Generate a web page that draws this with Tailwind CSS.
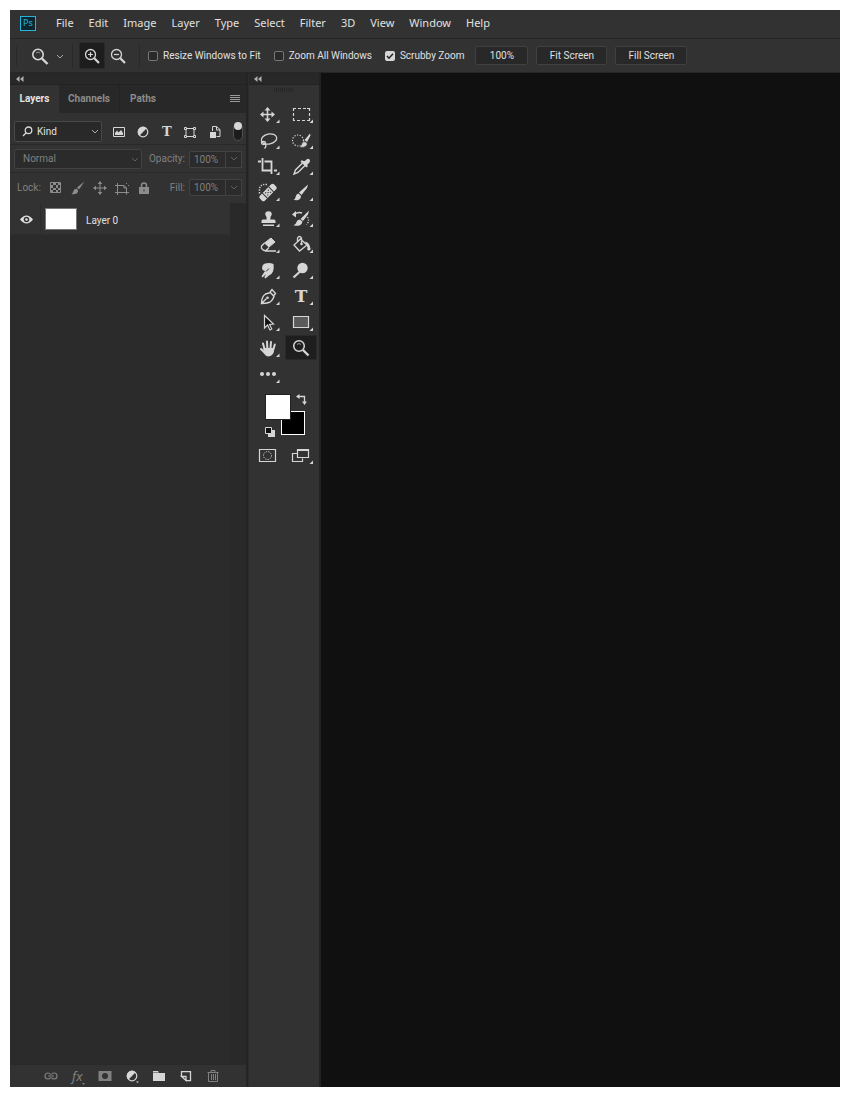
<!DOCTYPE html>
<html lang="en">
<head>
    <meta charset="UTF-8">
    <meta name="viewport" content="width=device-width, initial-scale=1.0">
    <title>Photoshop Workspace</title>
    <script src="https://cdn.jsdelivr.net/npm/@tailwindcss/browser@4"></script>
</head>
<body class="bg-white h-screen p-[10px] flex flex-col font-[Roboto,'Noto_Sans',sans-serif] text-[10px] leading-4 text-[#e0e0e0] cursor-default">

    <!-- Menu bar -->
    <nav class="flex items-center h-7 shrink-0 bg-[#323232] pl-[10px] pb-[2px] font-['Noto_Sans',sans-serif] text-[11px]">
        <span class="w-4 h-[15px] mr-5 border border-[#27b4d8] bg-[#0c2630] text-[#27b4d8] text-[9px] leading-3 text-center">Ps</span>
        <div class="flex gap-[15px]">
            <a href="#">File</a>
            <a href="#">Edit</a>
            <a href="#">Image</a>
            <a href="#">Layer</a>
            <a href="#">Type</a>
            <a href="#">Select</a>
            <a href="#">Filter</a>
            <a href="#">3D</a>
            <a href="#">View</a>
            <a href="#">Window</a>
            <a href="#">Help</a>
        </div>
    </nav>

    <!-- Options bar -->
    <div class="flex items-center h-[35px] shrink-0 bg-[#323232] border-t border-b border-[#262626] pl-[6px]">
        <span class="w-px h-5 bg-[#292929]"></span>
        <button class="flex items-center ml-[14px] gap-[7px]" aria-label="Zoom tool presets">
            <svg class="w-[18px] h-[18px]" viewBox="0 0 18 18" fill="none" stroke="#d6d6d6"><circle cx="7" cy="7.5" r="5.2" stroke-width="1.6"/><path d="M11 11.500l5.500 5.500" stroke-width="2.4"/><path d="M5 6q2-2 4.200 0" stroke="#999"/></svg>
            <svg class="w-2 h-2" viewBox="0 0 8 8" fill="none" stroke="#a8a8a8"><path d="M1 3l3 3 3-3"/></svg>
        </button>
        <span class="w-px h-6 ml-2 bg-[#292929]"></span>
        <button class="flex items-center justify-center w-[26px] h-[27px] ml-[6px] bg-[#1d1d1d] border border-[#292929]" aria-label="Zoom in">
            <svg class="w-4 h-4 shrink-0" viewBox="0 0 16 16" fill="none" stroke="#d6d6d6"><circle cx="6.5" cy="6.5" r="5" stroke-width="1.3"/><path d="M4 6.5h5M6.5 4v5" stroke-width="1.2"/><path d="M10.3 10.3l4.7 4.7" stroke-width="2.2"/></svg>
        </button>
        <button class="flex items-center justify-center w-[26px] h-[27px]" aria-label="Zoom out">
            <svg class="w-4 h-4 shrink-0" viewBox="0 0 16 16" fill="none" stroke="#d6d6d6"><circle cx="6.5" cy="6.5" r="5" stroke-width="1.3"/><path d="M4 6.5h5" stroke-width="1.2"/><path d="M10.3 10.3l4.7 4.7" stroke-width="2.2"/></svg>
        </button>
        <span class="w-px h-6 ml-2 bg-[#292929]"></span>
        <div class="flex items-center gap-[13px] ml-2">
            <label class="flex items-center gap-[5px]"><input type="checkbox" class="appearance-none w-[10px] h-[10px] border border-[#777] rounded-[2px] bg-[#292929]">Resize Windows to Fit</label>
            <label class="flex items-center gap-[5px]"><input type="checkbox" class="appearance-none w-[10px] h-[10px] border border-[#777] rounded-[2px] bg-[#292929]">Zoom All Windows</label>
            <label class="flex items-center gap-[5px]">
                <span class="grid">
                    <input type="checkbox" checked class="appearance-none w-[10px] h-[10px] rounded-[2px] bg-[#d6d6d6] col-start-1 row-start-1">
                    <svg class="w-[10px] h-[10px] col-start-1 row-start-1 pointer-events-none" viewBox="0 0 10 10" fill="none" stroke="#222" stroke-width="1.5"><path d="M2 5l2 2.2L8 2.8"/></svg>
                </span>Scrubby Zoom</label>
        </div>
        <div class="flex gap-2 ml-[11px]">
            <button class="w-[53px] h-[19px] bg-[#282828] border border-[#404040] rounded-[2px]">100%</button>
            <button class="w-[71px] h-[19px] bg-[#282828] border border-[#404040] rounded-[2px]">Fit Screen</button>
            <button class="w-[72px] h-[19px] bg-[#282828] border border-[#404040] rounded-[2px]">Fill Screen</button>
        </div>
    </div>

    <main class="flex flex-1 min-h-0 bg-[#101010]">
        <!-- Layers panel -->
        <section class="flex flex-col w-[238px] shrink-0 bg-[#2b2b2b] border-r-2 border-[#242424]">
            <div class="flex items-center h-3 shrink-0 bg-[#282828] border-b border-[#222] pl-[6px]">
                <svg class="w-2 h-[6px]" viewBox="0 0 8 6" fill="#b0b0b0"><path d="M3.5 0v6L0 3zM7.5 0v6L4 3z"/></svg>
            </div>
            <div class="flex items-stretch h-7 shrink-0 bg-[#282828] font-bold text-[#8c8c8c]">
                <button class="w-[49px] bg-[#323232] text-[#e4e4e4]">Layers</button>
                <button class="w-[61px] border-r border-[#232323]">Channels</button>
                <button class="w-[46px]">Paths</button>
                <button class="ml-auto mr-[6px]" aria-label="Panel menu">
                    <svg class="w-[10px] h-2" viewBox="0 0 10 8" fill="#999"><path d="M0 0h10v1H0zM0 2h10v1H0zM0 4h10v1H0zM0 6h10v1H0z"/></svg>
                </button>
            </div>

            <!-- Filter row -->
            <div class="flex items-center h-8 shrink-0 bg-[#323232] border-b border-[#292929] pl-[4px] pr-[3px] pt-[6px]">
                <div class="relative">
                    <select aria-label="Filter type" class="block appearance-none w-[88px] h-[21px] bg-[#292929] border border-[#484848] rounded-[2px] pl-[22px]">
                        <option>Kind</option>
                    </select>
                    <svg class="absolute left-[8px] top-[5px] w-[11px] h-[11px] pointer-events-none" viewBox="0 0 11 11" fill="none" stroke="#d6d6d6" stroke-width="1.3"><circle cx="6.5" cy="4.3" r="3.3"/><path d="M4.2 6.8L1 10"/></svg>
                    <svg class="absolute right-[3px] top-[7px] w-2 h-2 pointer-events-none" viewBox="0 0 8 8" fill="none" stroke="#a8a8a8"><path d="M1 2l3 3 3-3"/></svg>
                </div>
                <div class="flex items-center justify-between flex-1 ml-[11px] text-[#d6d6d6]">
                    <button aria-label="Pixel layers"><svg class="w-3 h-[14px]" viewBox="0 0 12 14"><path d="M.5 2.5h11v9H.5z" fill="none" stroke="currentColor"/><path d="M2 10V8l2-2.500L5.500 7.500 8 5l2 3v2z" fill="currentColor"/></svg></button>
                    <button aria-label="Adjustment layers"><svg class="w-3 h-[14px]" viewBox="0 0 12 14"><circle cx="6" cy="7" r="4.800" fill="none" stroke="currentColor" stroke-width="1.200"/><path d="M9.700 3.300A5.200 5.200 0 0 0 2.300 10.700z" fill="currentColor"/></svg></button>
                    <button aria-label="Type layers" class="font-['DejaVu_Serif',serif] font-bold text-[13px] leading-[14px]">T</button>
                    <button aria-label="Shape layers"><svg class="w-3 h-[14px]" viewBox="0 0 12 14" fill="none" stroke="currentColor"><path d="M2 4v6M10 4v6M3 3.500h6M3 11.500h6M.5 2.500h2v2h-2zM9.500 2.500h2v2h-2zM.5 10.500h2v2h-2zM9.500 10.500h2v2h-2z"/></svg></button>
                    <button aria-label="Smart objects"><svg class="w-3 h-[14px]" viewBox="0 0 12 14"><path d="M3.500 6V1.500h4l3.500 3v7H7.500M7.500 1.500v3.500H11" fill="none" stroke="currentColor"/><path d="M1 7h6v6H1z" fill="currentColor"/></svg></button>
                    <button aria-label="Toggle filtering" class="w-[10px] h-[18px] rounded-full bg-[#1c1c1c] border border-[#505050]"><span class="block w-2 h-2 rounded-full bg-[#d6d6d6] -mt-[10px]"></span></button>
                </div>
            </div>

            <!-- Blend mode row -->
            <div class="flex items-center h-7 shrink-0 bg-[#323232] border-b border-[#292929] pl-[4px] pr-1 pt-px text-[#808080]">
                <div class="relative">
                    <select aria-label="Blend mode" class="block appearance-none w-32 h-5 bg-[#2b2b2b] border border-[#424242] rounded-[2px] pl-2">
                        <option>Normal</option>
                    </select>
                    <svg class="absolute right-[3px] top-[7px] w-2 h-2 pointer-events-none" viewBox="0 0 8 8" fill="none" stroke="#606060"><path d="M1 2l3 3 3-3"/></svg>
                </div>
                <label for="opacity" class="ml-auto mr-1">Opacity:</label>
                <input id="opacity" value="100%" class="w-[37px] h-[17px] bg-[#2b2b2b] border border-[#424242] rounded-l-[2px] pl-1">
                <button class="flex items-center justify-center w-4 h-[17px] bg-[#2b2b2b] border border-l-0 border-[#424242]" aria-label="Opacity slider"><svg class="w-2 h-2" viewBox="0 0 8 8" fill="none" stroke="#606060"><path d="M1 2l3 3 3-3"/></svg></button>
            </div>

            <!-- Lock row -->
            <div class="flex items-center h-[30px] shrink-0 bg-[#323232] pl-[7px] pr-1 pb-px text-[#808080]">
                <span class="w-6">Lock:</span>
                <div class="flex items-center gap-2 ml-2 text-[#8c8c8c]">
                    <button aria-label="Lock transparent pixels"><svg class="w-[14px] h-[14px]" viewBox="0 0 14 14"><path d="M1.500 1.500h10v10h-10z" fill="none" stroke="currentColor"/><path d="M4 2h3v2H4zM9 2h2v2H9zM2 4h2v3H2zM7 4h2v3H7zM4 7h3v2H4zM9 7h2v2H9zM2 9h2v2H2zM7 9h2v2H7z" fill="currentColor"/></svg></button>
                    <button aria-label="Lock image pixels"><svg class="w-[14px] h-[14px]" viewBox="0 0 14 14" fill="currentColor"><path d="M13.500.5L6 6.500l2 2zM5.500 7.500q-2.500 0-3 2.500-.5 2-2 3 5 .8 6.500-2 .8-2-1.500-3.500z"/></svg></button>
                    <button aria-label="Lock position"><svg class="w-[14px] h-[14px]" viewBox="0 0 14 14"><path d="M7 2v10M2 7h10" stroke="currentColor"/><path d="M7 0l2.300 3H4.700zM7 14l2.300-3H4.700zM0 7l3-2.300v4.600zM14 7l-3-2.300v4.600z" fill="currentColor"/></svg></button>
                    <button aria-label="Lock artboard nesting"><svg class="w-[14px] h-[14px]" viewBox="0 0 14 14" fill="none" stroke="currentColor"><path d="M0 4.500h9l2.500 2.500v6.500M2.500 2v12M0 11.500h14M9 4.500V7h2.500M11.500 2v1M13 4.500h1"/></svg></button>
                    <button aria-label="Lock all"><svg class="w-[14px] h-[14px]" viewBox="0 0 14 14"><path d="M2 6h10v7H2z" fill="currentColor"/><path d="M4.500 7V4.500a2.500 2.500 0 0 1 5 0V7" fill="none" stroke="currentColor" stroke-width="1.500"/><path d="M6.500 8.500h1v2h-1z" fill="#323232"/></svg></button>
                </div>
                <label for="fill" class="ml-auto mr-1">Fill:</label>
                <input id="fill" value="100%" class="w-[37px] h-[17px] bg-[#2b2b2b] border border-[#424242] rounded-l-[2px] pl-1">
                <button class="flex items-center justify-center w-4 h-[17px] bg-[#2b2b2b] border border-l-0 border-[#424242]" aria-label="Fill slider"><svg class="w-2 h-2" viewBox="0 0 8 8" fill="none" stroke="#606060"><path d="M1 2l3 3 3-3"/></svg></button>
            </div>

            <!-- Layer list -->
            <div class="flex flex-1 min-h-0">
                <ul class="flex-1">
                    <li class="flex items-center h-8 bg-[#323232] border-b border-[#2d2d2d]">
                        <button class="flex items-center justify-center w-[31px] h-full pl-[2px] pt-px border-r border-[#2c2c2c]" aria-label="Toggle visibility">
                            <svg class="w-[13px] h-[9px]" viewBox="0 0 13 9"><path d="M0 4.500Q6.500-3.500 13 4.500 6.500 12.500 0 4.500z" fill="#e0e0e0"/><circle cx="6.500" cy="4.500" r="2.800" fill="#323232"/><circle cx="6.500" cy="4.500" r="1.300" fill="#e0e0e0"/></svg>
                        </button>
                        <span class="w-8 h-[22px] ml-1 bg-white border border-[#777]"></span>
                        <span class="ml-[9px] pt-1">Layer 0</span>
                    </li>
                </ul>
                <div class="w-4 bg-[#292929]"></div>
            </div>

            <!-- Panel footer -->
            <div class="flex items-center h-[23px] shrink-0 gap-[13px] bg-[#323232] border-t border-[#292929] pl-[34px] text-[#808080]">
                <button aria-label="Link layers"><svg class="w-[14px] h-[14px]" viewBox="0 0 14 14" fill="none" stroke="currentColor" stroke-width="1.200"><path d="M6.500 5.500Q6 4 4 4a3 3 0 0 0 0 6q2 0 2.500-1.500M7.500 5.500Q8 4 10 4a3 3 0 0 1 0 6q-2 0-2.500-1.500M4 7h6"/></svg></button>
                <button aria-label="Layer style" class="flex items-end w-[14px] h-[18px] pl-px text-[13px] leading-[18px] italic font-['Noto_Sans',sans-serif]">fx<svg class="w-[3px] h-[3px] shrink-0" viewBox="0 0 3 3" fill="currentColor"><path d="M0 1h3L1.500 3z"/></svg></button>
                <button aria-label="Add mask"><svg class="w-[14px] h-[14px]" viewBox="0 0 14 14"><path d="M.5 2h13v10H.5z" fill="currentColor"/><circle cx="7" cy="7" r="3" fill="#323232"/></svg></button>
                <button aria-label="New adjustment layer" class="text-[#d6d6d6]"><svg class="w-[14px] h-[14px]" viewBox="0 0 14 14"><circle cx="7" cy="7" r="4.800" fill="none" stroke="currentColor" stroke-width="1.200"/><path d="M10.700 3.300A5.200 5.200 0 0 0 3.300 10.700zM11 12.500h3L12.500 14z" fill="currentColor"/></svg></button>
                <button aria-label="New group" class="text-[#d6d6d6]"><svg class="w-[14px] h-[14px]" viewBox="0 0 14 14" fill="currentColor"><path d="M1 2h5l1 1.500H1zM1 4h12v8H1z"/></svg></button>
                <button aria-label="New layer" class="text-[#d6d6d6]"><svg class="w-[14px] h-[14px]" viewBox="0 0 14 14" fill="none" stroke="currentColor" stroke-width="1.300"><path d="M2.500 7.500V2.600h9v9H7M2.500 7.500H7v4.100z"/></svg></button>
                <button aria-label="Delete layer"><svg class="w-[14px] h-[14px]" viewBox="0 0 14 14" fill="none" stroke="currentColor"><path d="M1.500 3.500h11M5 3V1.500h4V3M2.500 3.500v9h9v-9M5.500 5v6M7.500 5v6M9.500 5v6"/></svg></button>
            </div>
        </section>

        <!-- Tools panel -->
        <aside class="flex flex-col w-[73px] shrink-0 bg-[#323232] border-l border-r-2 border-l-[#2c2c2c] border-r-[#222] text-[#d6d6d6]">
            <div class="flex items-center h-3 shrink-0 bg-[#282828] border-b border-[#222] pl-[5px]">
                <svg class="w-2 h-[6px]" viewBox="0 0 8 6" fill="#b0b0b0"><path d="M3.500 0v6L0 3zM7.500 0v6L4 3z"/></svg>
            </div>
            <span class="w-5 h-1 mt-[3px] mb-[9px] ml-[25px] bg-[repeating-linear-gradient(90deg,#282828_0_1px,#303030_1px_2px)]"></span>

            <div class="grid grid-cols-[33px_33px] auto-rows-[26px] ml-[3px]">
                <button aria-label="Move"><svg class="w-[33px] h-[26px]" viewBox="0 0 33 26"><path d="M15.500 8v11M10 13.500h11" stroke="currentColor" stroke-width="1.500"/><path d="M15.500 6l3 3.500h-6zM15.500 21l3-3.500h-6zM8 13.500l3.500-3v6zM23 13.500l-3.500-3v6zM27.500 18.500v3.500h-3.500z" fill="currentColor"/></svg></button>
                <button aria-label="Rectangular marquee"><svg class="w-[33px] h-[26px]" viewBox="0 0 33 26"><path d="M8.500 10V7.500H11M13 7.500h3M18 7.500h3M22 7.500h2.500V10M24.500 12v3M24.500 17v2.500H22M20 19.500h-3M15 19.500h-3M10 19.500H8.500V17M8.500 15v-3" fill="none" stroke="currentColor" stroke-width="1.200"/><path d="M28 18.500v3.500h-3.500z" fill="currentColor"/></svg></button>

                <button aria-label="Lasso"><svg class="w-[33px] h-[26px]" viewBox="0 0 33 26"><g fill="none" stroke="currentColor" stroke-width="1.300"><ellipse cx="17" cy="12" rx="7.800" ry="5" transform="rotate(-12 17 12)"/><ellipse cx="11.500" cy="16" rx="2" ry="1.500"/><path d="M13 17q2 2-.5 4.500"/></g><path d="M27.500 18.500v3.500h-3.500z" fill="currentColor"/></svg></button>
                <button aria-label="Quick selection"><svg class="w-[33px] h-[26px]" viewBox="0 0 33 26"><circle cx="13" cy="13.500" r="5.500" fill="none" stroke="currentColor" stroke-width="1.200" stroke-dasharray="1.200 1.500"/><path d="M14 20q2.500-1 3-3.500 1-3 4-1.500 2.500 2 0 4.200-3 2-7 .8z" fill="currentColor" stroke="#323232" stroke-width=".6"/><path d="M25 6.500l.5 2-3.500 6.500-2.500-2zM28 18.500v3.500h-3.500z" fill="currentColor"/></svg></button>

                <button aria-label="Crop"><svg class="w-[33px] h-[26px]" viewBox="0 0 33 26"><path d="M10.500 5v12.500H20M6 8.500h3M12.500 8.500h7V21M22 17.500h3" fill="none" stroke="currentColor" stroke-width="1.800"/><path d="M27.500 18.500v3.500h-3.500z" fill="currentColor"/></svg></button>
                <button aria-label="Eyedropper"><svg class="w-[33px] h-[26px]" viewBox="0 0 33 26"><path d="M18 9.500l-7.500 7.500-1.500 4 4-1.500 7.500-7.500" fill="none" stroke="currentColor" stroke-width="1.400"/><path d="M20 8q3-3.500 4.500-1.500t-1.500 4.500l-1 1 1 1-1.500 1.500-6-6L17 7l1 1zM28 18.500v3.500h-3.500z" fill="currentColor"/></svg></button>

                <button aria-label="Spot healing"><svg class="w-[33px] h-[26px]" viewBox="0 0 33 26"><path d="M15 5.500Q7 4.500 7.500 12v3" fill="none" stroke="currentColor" stroke-width="1.500" stroke-dasharray="1.300 1.300"/><g transform="rotate(-45 16 13.500)"><rect x="6" y="10" width="20" height="7" rx="2" fill="currentColor"/><path d="M11.500 10v7M20.500 10v7" stroke="#323232"/><path d="M13.500 11.500h1.200v1.200h-1.200zM17.300 11.500h1.200v1.200h-1.200zM15.400 13h1.200v1.200h-1.200zM13.500 14.500h1.200v1.200h-1.200zM17.300 14.500h1.200v1.200h-1.200z" fill="#323232"/></g><path d="M27.500 18.500v3.500h-3.500z" fill="currentColor"/></svg></button>
                <button aria-label="Brush"><svg class="w-[33px] h-[26px]" viewBox="0 0 33 26" fill="currentColor"><path d="M23 5.500l-1 3.500-5.500 7-2.500-2.500zM13.500 14.500l2.500 2.500q0 3-3 4-2.500.6-4.500-.2 2-.8 2.200-3.300.5-2.500 2.800-3zM28 18.500v3.500h-3.500z"/></svg></button>

                <button aria-label="Clone stamp"><svg class="w-[33px] h-[26px]" viewBox="0 0 33 26" fill="currentColor"><path d="M13.200 9.500a3.300 3.300 0 1 1 6.600 0q-1.500 2-1.500 5H22q1.500 0 1.500 1.500v2h-14v-2q0-1.500 1.500-1.500h3.700q0-3-1.500-5zM11 19.500h11V21H11zM27.500 18.500v3.500h-3.500z"/></svg></button>
                <button aria-label="History brush"><svg class="w-[33px] h-[26px]" viewBox="0 0 33 26"><path d="M24 5.500l-1 4-5 6.500-2.500-2zM15 14.500l2.500 2.300q-.5 3-3 3.700-3 .7-6-.3 2.500-.8 3-3.200.5-2.300 3.500-2.500zM7 9.500l4-3.500v6.500zM28 18.500v3.500h-3.500z" fill="currentColor"/><path d="M10 9q3.500-2.500 7-1" fill="none" stroke="currentColor" stroke-width="1.500"/><path d="M22.500 12q2.500 4-1 7.500" fill="none" stroke="currentColor" stroke-width="1.200" stroke-dasharray="1.300 1.300"/></svg></button>

                <button aria-label="Eraser"><svg class="w-[33px] h-[26px]" viewBox="0 0 33 26"><path d="M19 7l4 4-6 5-4.500-4z" fill="currentColor" stroke="currentColor"/><path d="M12.500 12l-3 3v2.500l2.500 2h2l3-3M13 20h11" fill="none" stroke="currentColor" stroke-width="1.300"/><path d="M27.500 18.500v3.500h-3.500z" fill="currentColor"/></svg></button>
                <button aria-label="Paint bucket"><svg class="w-[33px] h-[26px]" viewBox="0 0 33 26"><path d="M15.500 8l6.500 6-7.500 6-5.500-6zM16.500 12.500V7q-2-3-4 0v3.500" fill="none" stroke="currentColor" stroke-width="1.300"/><circle cx="16.500" cy="13" r="1.300" fill="currentColor"/><path d="M20 10.500q4.500 1 5 5.500 1.500 3-.8 3.500-2.700.2-1.700-3zM28 18.500v3.500h-3.500z" fill="currentColor"/></svg></button>

                <button aria-label="Smudge"><svg class="w-[33px] h-[26px]" viewBox="0 0 33 26"><path d="M10.500 13q-1.500-5 2.500-6.500Q17.500 5.500 21.500 7q.8 4.500-.5 7.500-1.200 3-4 4l-3.500 3-1.200-1L14 17l-3.500 3.500-1-1.200 3.500-5.300-1.200-.5z" fill="currentColor"/><path d="M14 14.500l3-3" stroke="#323232"/><path d="M27.500 18.500v3.500h-3.500z" fill="currentColor"/></svg></button>
                <button aria-label="Dodge"><svg class="w-[33px] h-[26px]" viewBox="0 0 33 26"><circle cx="17.500" cy="11" r="5.200" fill="currentColor"/><path d="M14.500 15l-6 5.500" stroke="currentColor" stroke-width="2.200"/><path d="M28 18.500v3.500h-3.500z" fill="currentColor"/></svg></button>

                <button aria-label="Pen"><svg class="w-[33px] h-[26px]" viewBox="0 0 33 26"><path d="M9.500 20.500q0-7 4-9.500l5-1.500 3.500 4q-2 5-5 6-3 1-7.500 1zM9.500 20.500l5-5M18 9l2-2.500 3.500 4-2 2.500" fill="none" stroke="currentColor" stroke-width="1.400"/><circle cx="15.500" cy="14.800" r="1.300" fill="currentColor"/><path d="M27.500 18.500v3.500h-3.500z" fill="currentColor"/></svg></button>
                <button aria-label="Type" class="flex justify-end"><span class="w-4 text-center font-['DejaVu_Serif',serif] font-bold text-[17px] leading-[26px]">T</span><svg class="w-1 h-[26px] shrink-0 mr-[5px]" viewBox="0 0 4 26" fill="currentColor"><path d="M4 18.500v3.500H.5z"/></svg></button>

                <button aria-label="Path selection"><svg class="w-[33px] h-[26px]" viewBox="0 0 33 26"><path d="M12.500 6.500v12.500l3-3 2.500 5 1.800-1-2.300-4.500 4-.5z" fill="#111" stroke="currentColor" stroke-width="1.200"/><path d="M27.500 18.500v3.500h-3.500z" fill="currentColor"/></svg></button>
                <button aria-label="Rectangle"><svg class="w-[33px] h-[26px]" viewBox="0 0 33 26"><path d="M8.500 7.500h15v11h-15z" fill="#5a5a5a" stroke="currentColor" stroke-width="1.200"/><path d="M28 18.500v3.500h-3.500z" fill="currentColor"/></svg></button>

                <button aria-label="Hand"><svg class="w-[33px] h-[26px]" viewBox="0 0 33 26"><path d="M12.500 14L11 8.500M15.300 13L15 6.500M18.500 13l.5-6M21.300 14.500l1.500-5M12.500 17.500L9 14" stroke="currentColor" stroke-width="2" stroke-linecap="round"/><path d="M11.500 13h10.800q0 8-5.800 8.500-3 0-5-4zM27.500 18.500v3.500h-3.500z" fill="currentColor"/></svg></button>
                <button aria-label="Zoom" class="h-[25px] w-8 bg-[#1e1e1e] border border-[#292929] rounded-[1px]"><svg class="w-[30px] h-[23px]" viewBox="1 2 30 23" fill="none" stroke="currentColor"><circle cx="14" cy="12" r="5.300" stroke-width="1.500"/><path d="M18 16l5.500 5.500" stroke-width="2.400"/><path d="M12 10.500q2-2 4 0" stroke="#999"/></svg></button>

                <button aria-label="Edit toolbar"><svg class="w-[33px] h-[26px]" viewBox="0 0 33 26" fill="currentColor"><circle cx="10" cy="13" r="2"/><circle cx="16" cy="13" r="2"/><circle cx="22" cy="13" r="2"/><path d="M27.500 18.500v3.500h-3.500z"/></svg></button>
            </div>

            <!-- Foreground and background colours -->
            <div class="grid grid-cols-[26px_16px] grid-rows-[18px_26px] ml-4 mt-[7px]">
                <button class="relative z-10 w-[26px] h-[26px] bg-white border border-[#222]" aria-label="Foreground color"></button>
                <button class="flex justify-end" aria-label="Swap colors"><svg class="w-[11px] h-[11px]" viewBox="0 0 11 11"><path d="M3 2.500h5.500V8" fill="none" stroke="currentColor" stroke-width="1.300"/><path d="M0 2.500L3.500 0v5zM8.500 11L6 7.500h5z" fill="currentColor"/></svg></button>
                <button class="self-end justify-self-start mb-px" aria-label="Default colors"><svg class="w-[10px] h-[10px]" viewBox="0 0 10 10"><path d="M3 3h7v7H3z" fill="currentColor"/><path d="M.5.500h6v6h-6z" fill="#111" stroke="currentColor"/></svg></button>
                <button class="w-6 h-6 -ml-[10px] -mt-px bg-black border border-white" aria-label="Background color"></button>
            </div>

            <div class="flex ml-[3px] mt-1">
                <button aria-label="Quick mask mode"><svg class="w-[33px] h-[26px]" viewBox="0 0 33 26" fill="none" stroke="currentColor"><path d="M7.500 7.500h16v12h-16z" stroke-width="1.200"/><circle cx="15.500" cy="13.500" r="4" stroke-dasharray="1.200 1.200"/></svg></button>
                <button aria-label="Screen mode"><svg class="w-[33px] h-[26px]" viewBox="0 0 33 26"><path d="M12.500 11.500h-5v8h10v-3M12.500 7.500h11v8h-11z" fill="none" stroke="currentColor" stroke-width="1.200"/><path d="M12 7h12v2H12zM28 18.500v3.500h-3.500z" fill="currentColor"/></svg></button>
            </div>
        </aside>

        <!-- Empty canvas -->
        <div class="flex-1"></div>
    </main>
</body>
</html>
